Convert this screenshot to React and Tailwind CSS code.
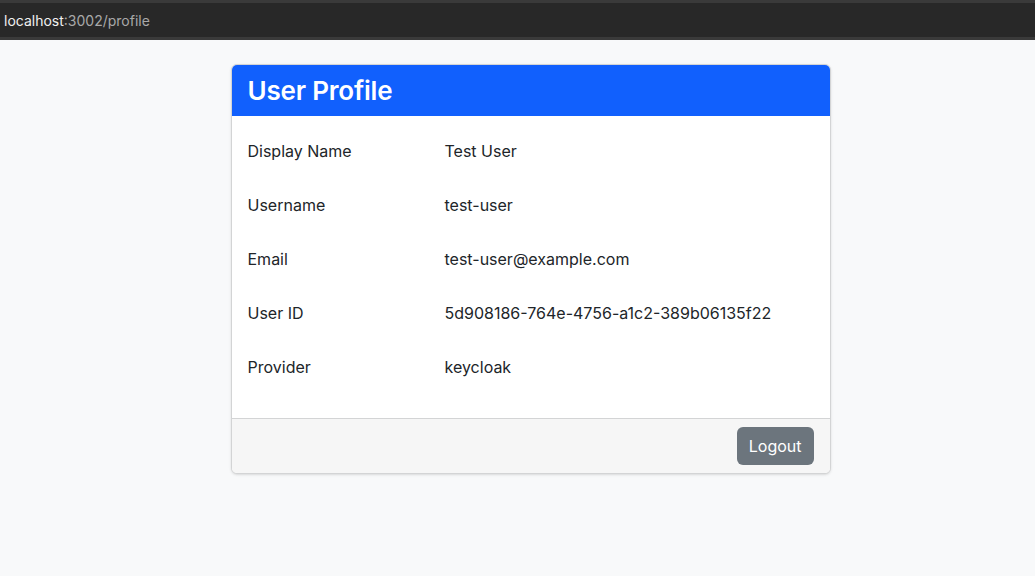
const rows = [
  ['Display Name', 'Test User'],
  ['Username', 'test-user'],
  ['Email', 'test-user@example.com'],
  ['User ID', '5d908186-764e-4756-a1c2-389b06135f22'],
  ['Provider', 'keycloak'],
];

export default function App() {
  return (
    <div className="min-h-[576px] bg-[#f8f9fa] text-[#212529]" style={{ fontFamily: 'Inter, "Liberation Sans", sans-serif' }}>
      {/* address bar */}
      <div className="bg-[#3a3a3a] pt-[3px] pb-[3px]">
        <div className="h-[34px] bg-[#282828] flex items-center px-[4px] text-[14px]">
          <span className="text-[#f0f0f0]">localhost</span>
          <span className="text-[#a8a8a8]">:3002/profile</span>
        </div>
      </div>

      <div className="flex justify-center pt-[24px] pl-[26px]">
        <div className="w-[600px] bg-white border border-[#d3d4d5] rounded-[6px] overflow-hidden shadow-sm">
          <div className="h-[51px] bg-[#1160fd] flex items-center px-[16px]">
            <h1 className="text-white text-[26px] font-semibold leading-none tracking-[-0.2px]">User Profile</h1>
          </div>
          <div className="px-[16px] pt-[8px] pb-[24px]">
            {rows.map(([k, v]) => (
              <div key={k} className="flex items-center h-[54px] text-[16px]">
                <div className="w-[197px]">{k}</div>
                <div>{v}</div>
              </div>
            ))}
          </div>
          <div className="h-[55px] border-t border-[#d3d4d5] bg-[#f6f6f6] flex items-center justify-end px-[16px]">
            <button className="h-[38px] px-[12px] rounded-[6px] bg-[#6c757d] text-white text-[16px]">Logout</button>
          </div>
        </div>
      </div>
    </div>
  );
}
